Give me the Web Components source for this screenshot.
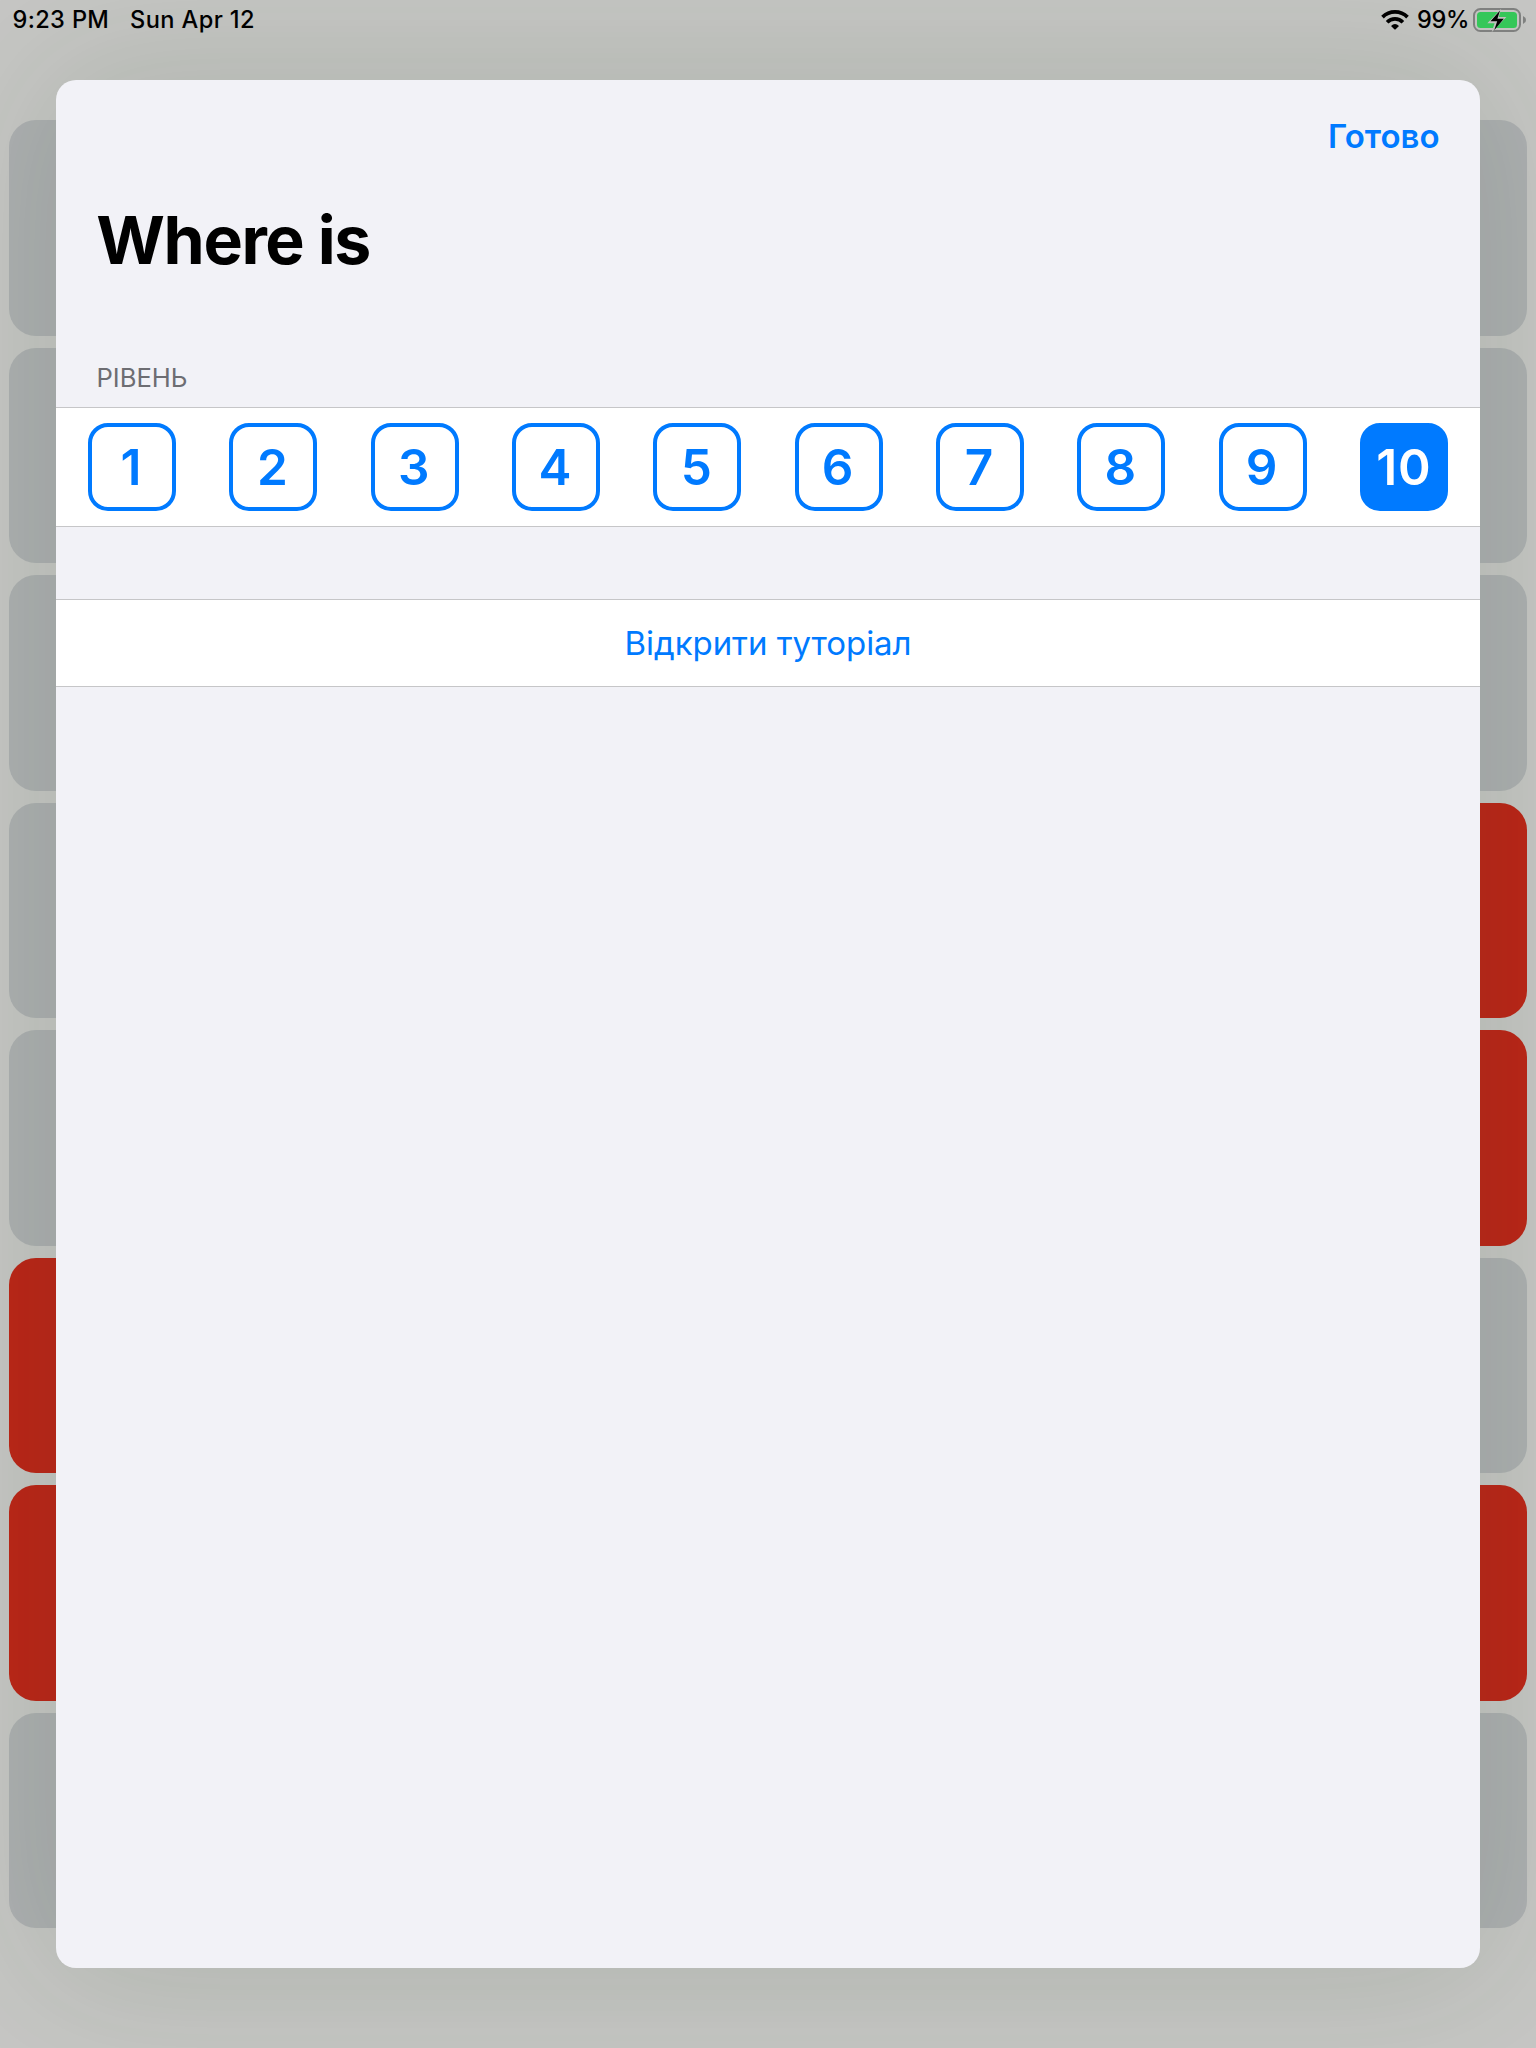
<!DOCTYPE html>
<html lang="uk">
<head>
<meta charset="utf-8">
<title>Where is</title>
<style>
  html, body { margin: 0; height: 2048px; overflow: hidden; }
  body { font-family: Inter, "Liberation Sans", sans-serif; }
</style>
</head>
<body>
<app-screen></app-screen>
<script>
const define = (name, html, setup) => {
  const template = document.createElement('template');
  template.innerHTML = html;
  customElements.define(name, class extends HTMLElement {
    connectedCallback() {
      if (this.shadowRoot) return;
      const root = this.attachShadow({ mode: 'open' });
      root.append(template.content.cloneNode(true));
      if (setup) setup(root, this);
    }
  });
};

define('wifi-icon', `
  <style>:host{display:block;width:28px;height:22px} svg{display:block}</style>
  <svg width="28" height="22" viewBox="0 0 28 22" fill="none" stroke="#000" stroke-width="3.7">
    <path d="M1.5 8.1A17.8 17.8 0 0 1 26.5 8.1"/>
    <path d="M6.1 13.2A11 11 0 0 1 21.9 13.2"/>
    <path d="M10 16.9Q14 13.2 18 16.9L14.7 20.2Q14 20.9 13.3 20.2Z" fill="#000" stroke="none"/>
  </svg>`);

define('battery-icon', `
  <style>:host{display:block;width:54px;height:26px} svg{display:block}</style>
  <svg width="54" height="26" viewBox="0 0 54 26">
    <rect x="1" y="2" width="46" height="22" rx="6.5" fill="none" stroke="#7f807f" stroke-width="2"/>
    <path d="M50 9Q53 10.3 53 13T50 17Z" fill="#7f807f"/>
    <rect x="4" y="5" width="40" height="16" rx="3.5" fill="#35c759"/>
    <path d="M28.2 1.8L14.3 16.2H21.6L18.6 25.2L33.4 9.9H25.8Z" fill="#c1c2bf"/>
    <path d="M27 3.6L17.5 14.2H24.2L21.2 23.2L30.8 11.8H24.4Z" fill="#000"/>
  </svg>`);

define('status-bar', `
  <style>
    :host{display:flex;align-items:center;height:40px;padding:0 9px 0 12.5px;
      font-size:23.6px;line-height:40px;font-weight:500;color:#000;white-space:nowrap}
    .time{width:117.5px;letter-spacing:.35px}
    .date{flex:1;letter-spacing:.4px}
    wifi-icon{margin-right:8px}
    .pct{width:56px;letter-spacing:-.3px}
  </style>
  <span class="time">9:23 PM</span><span class="date">Sun Apr 12</span>
  <wifi-icon></wifi-icon><span class="pct">99%</span><battery-icon></battery-icon>`);

define('game-tile', `
  <style>
    :host{display:block;border-radius:27px;background:#aeb0b2}
    :host([red]){background:#bd2518}
  </style>`);

define('game-board', `
  <style>
    :host{display:grid;box-sizing:border-box;height:1808px;margin:80px 9px 0;
      grid-template-columns:1fr 1fr;grid-template-rows:repeat(8,1fr);gap:12px}
  </style>
  <game-tile></game-tile><game-tile></game-tile>
  <game-tile></game-tile><game-tile></game-tile>
  <game-tile></game-tile><game-tile></game-tile>
  <game-tile></game-tile><game-tile red></game-tile>
  <game-tile></game-tile><game-tile red></game-tile>
  <game-tile red></game-tile><game-tile></game-tile>
  <game-tile red></game-tile><game-tile red></game-tile>
  <game-tile></game-tile><game-tile></game-tile>`);

define('level-button', `
  <style>
    :host{display:flex;align-items:center;justify-content:center;box-sizing:border-box;
      width:88px;height:88px;border:4px solid #007aff;border-radius:20px;
      padding:1px 2px 0 0;color:#007aff;font-size:49.5px;line-height:79px;font-weight:600}
    :host([selected]){background:#007aff;color:#fff;letter-spacing:1px;padding-right:0}
  </style><slot></slot>`);

define('level-picker', `
  <style>
    :host{display:flex;justify-content:space-between;padding:15px 32px}
  </style>`, root => {
  for (let level = 1; level <= 10; level++) {
    const button = document.createElement('level-button');
    button.textContent = level;
    button.toggleAttribute('selected', level === 10);
    root.append(button);
  }
});

define('form-section', `
  <style>
    :host{display:block}
    .rows{background:#fff;border:solid #c6c6c8;border-width:1px 0}
    header{height:58px;padding:0 40.5px;font-size:25.6px;line-height:58px;color:#6d6d72}
  </style><header></header><div class="rows"><slot></slot></div>`, (root, host) => {
  const header = root.querySelector('header');
  if (host.hasAttribute('heading')) header.textContent = host.getAttribute('heading');
  else header.remove();
});

define('link-row', `
  <style>
    :host{display:block;height:86px;text-align:center;color:#007aff;
      font-size:33px;line-height:86px;letter-spacing:-.05px}
  </style><slot></slot>`);

define('modal-sheet', `
  <style>
    :host{display:flex;flex-direction:column;box-sizing:border-box;width:1424px;height:1888px;
      border-radius:20px;background:#f2f2f7;overflow:hidden;
      box-shadow:0 0 150px 16px rgba(30,62,25,.14)}
    nav{display:flex;justify-content:flex-end;height:112px;padding-right:40.5px;
      font-size:33px;line-height:112px;font-weight:600;color:#007aff}
    h1{margin:0 0 53px;height:96px;padding-left:40.3px;font-size:66.2px;line-height:96px;
      font-weight:700;color:#000;letter-spacing:-1.4px}
    form-section + form-section{margin-top:72px}
    .first{padding-top:8px}
  </style>
  <nav><span>Готово</span></nav>
  <h1>Where is</h1>
  <form-section class="first" heading="РІВЕНЬ"><level-picker></level-picker></form-section>
  <form-section><link-row>Відкрити туторіал</link-row></form-section>`);

define('app-screen', `
  <style>
    :host{display:block;position:relative;width:1536px;height:2048px;background:#c7c7c5;overflow:hidden}
    modal-sheet{position:absolute;left:56px;top:80px}
    status-bar{position:relative;z-index:1}
  </style>
  <status-bar></status-bar>
  <game-board></game-board>
  <modal-sheet></modal-sheet>`);
</script>
</body>
</html>
